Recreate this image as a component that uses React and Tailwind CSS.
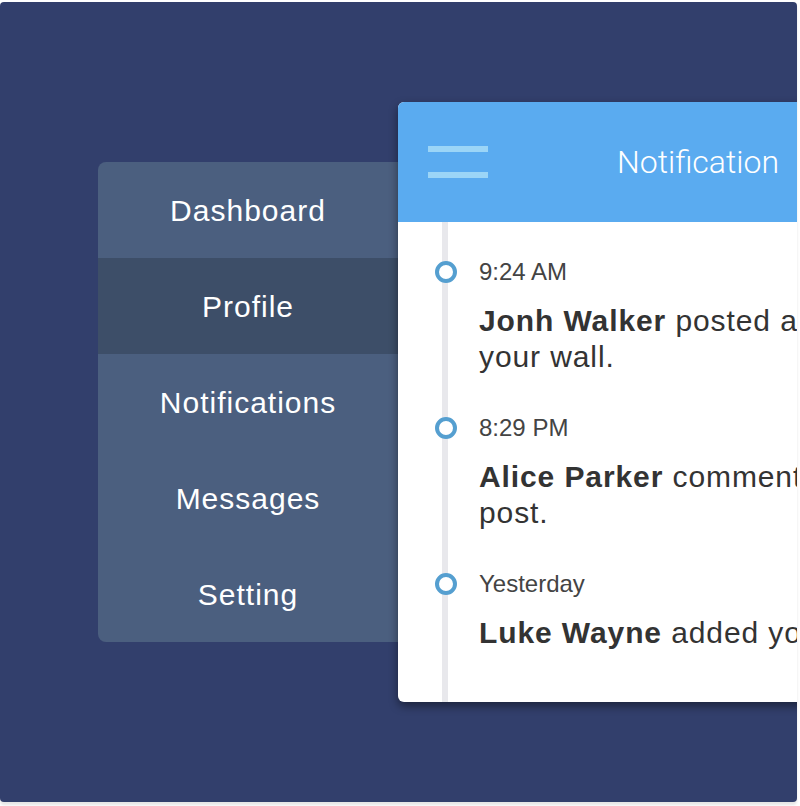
import React from "react";

const menu = ["Dashboard", "Profile", "Notifications", "Messages", "Setting"];

const feed = [
  { time: "9:24 AM", name: "Jonh Walker", text: "posted a photo on", rest: "your wall." },
  { time: "8:29 PM", name: "Alice Parker", text: "commented on your", rest: "post." },
  { time: "Yesterday", name: "Luke Wayne", text: "added you as a friend.", rest: "" },
];

const Sidebar = () => (
  <div className="mt-[60px] w-[300px] shrink-0 rounded-l-[8px] overflow-hidden bg-[#4b5f7f]">
    {menu.map((item) => (
      <div
        key={item}
        className={`h-[96px] flex items-center justify-center text-white text-[30px] tracking-[1px] ${
          item === "Profile" ? "bg-[#3d4e68]" : ""
        }`}
      >
        {item}
      </div>
    ))}
  </div>
);

const NotificationCard = () => (
  <div className="w-[520px] h-[600px] shrink-0 bg-white rounded-[6px] overflow-hidden shadow-[0_4px_10px_rgba(0,0,0,0.45)] flex flex-col">
    <div className="h-[120px] shrink-0 bg-[#5aabf0] flex items-center pl-[30px]">
      {/* hamburger */}
      <div className="flex flex-col gap-[20px]">
        <div className="w-[60px] h-[6px] bg-[#9bd5f7]" />
        <div className="w-[60px] h-[6px] bg-[#9bd5f7]" />
      </div>
      <div className="ml-[129px] text-white text-[32px] font-light font-['Roboto',sans-serif]">
        Notification
      </div>
    </div>
    <div className="relative flex-1 pt-[38px]">
      <div className="absolute left-[44px] top-0 bottom-0 w-[6px] bg-[#e8e8ec]" />
      {feed.map((n) => (
        <div key={n.time} className="relative h-[156px] pl-[81px]">
          <div className="absolute left-[37px] top-[1px] w-[22px] h-[22px] rounded-full border-[4px] border-[#559fd0] bg-white" />
          <div className="h-[24px] leading-[24px] text-[24px] text-[#444]">{n.time}</div>
          <div className="mt-[19px] text-[30px] leading-[36px] tracking-[0.9px] text-[#333] whitespace-nowrap">
            <span className="font-bold">{n.name}</span> {n.text}
            {n.rest && (
              <>
                <br />
                {n.rest}
              </>
            )}
          </div>
        </div>
      ))}
    </div>
  </div>
);

export default function App() {
  return (
    <div className="w-[800px] h-[806px] bg-white pt-[2px] font-['Liberation_Sans',Arial,sans-serif]">
      <div className="w-[797px] h-[800px] bg-[#323f6c] rounded-[4px] overflow-hidden shadow-[0_3px_3px_rgba(0,0,0,0.1)] flex items-start pt-[100px] pl-[98px]">
        <Sidebar />
        <NotificationCard />
      </div>
    </div>
  );
}
